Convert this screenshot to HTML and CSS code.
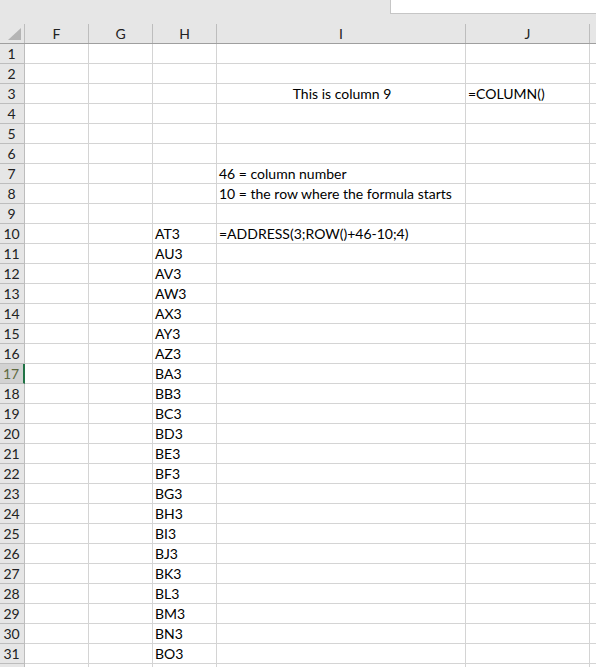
FILE: index.html
```html
<!DOCTYPE html>
<html lang="en">
<head>
    <meta charset="UTF-8">
    <title>Sheet1</title>
    <link rel="stylesheet" href="styles.css">
</head>
<body>
    <!-- ribbon strip with the name box edge -->
    <div class="topbar">
        <div class="namebox"></div>
    </div>

    <div class="sheet">
        <div class="row head">
            <div class="corner"><span class="tri"></span></div>
            <div class="col">F</div>
            <div class="col">G</div>
            <div class="col">H</div>
            <div class="col">I</div>
            <div class="col">J</div>
            <div class="col"></div>
        </div>
        <div class="row"><div class="rh">1</div><div class="c"></div><div class="c"></div><div class="c"></div><div class="c"></div><div class="c"></div><div class="c"></div></div>
        <div class="row"><div class="rh">2</div><div class="c"></div><div class="c"></div><div class="c"></div><div class="c"></div><div class="c"></div><div class="c"></div></div>
        <div class="row"><div class="rh">3</div><div class="c"></div><div class="c"></div><div class="c"></div><div class="c center">This is column 9</div><div class="c">=COLUMN()</div><div class="c"></div></div>
        <div class="row"><div class="rh">4</div><div class="c"></div><div class="c"></div><div class="c"></div><div class="c"></div><div class="c"></div><div class="c"></div></div>
        <div class="row"><div class="rh">5</div><div class="c"></div><div class="c"></div><div class="c"></div><div class="c"></div><div class="c"></div><div class="c"></div></div>
        <div class="row"><div class="rh">6</div><div class="c"></div><div class="c"></div><div class="c"></div><div class="c"></div><div class="c"></div><div class="c"></div></div>
        <div class="row"><div class="rh">7</div><div class="c"></div><div class="c"></div><div class="c"></div><div class="c">46 = column number</div><div class="c"></div><div class="c"></div></div>
        <div class="row"><div class="rh">8</div><div class="c"></div><div class="c"></div><div class="c"></div><div class="c">10 = the row where the formula starts</div><div class="c"></div><div class="c"></div></div>
        <div class="row"><div class="rh">9</div><div class="c"></div><div class="c"></div><div class="c"></div><div class="c"></div><div class="c"></div><div class="c"></div></div>
        <div class="row"><div class="rh">10</div><div class="c"></div><div class="c"></div><div class="c">AT3</div><div class="c overflow">=ADDRESS(3;ROW()+46-10;4)</div><div class="c"></div><div class="c"></div></div>
        <div class="row"><div class="rh">11</div><div class="c"></div><div class="c"></div><div class="c">AU3</div><div class="c"></div><div class="c"></div><div class="c"></div></div>
        <div class="row"><div class="rh">12</div><div class="c"></div><div class="c"></div><div class="c">AV3</div><div class="c"></div><div class="c"></div><div class="c"></div></div>
        <div class="row"><div class="rh">13</div><div class="c"></div><div class="c"></div><div class="c">AW3</div><div class="c"></div><div class="c"></div><div class="c"></div></div>
        <div class="row"><div class="rh">14</div><div class="c"></div><div class="c"></div><div class="c">AX3</div><div class="c"></div><div class="c"></div><div class="c"></div></div>
        <div class="row"><div class="rh">15</div><div class="c"></div><div class="c"></div><div class="c">AY3</div><div class="c"></div><div class="c"></div><div class="c"></div></div>
        <div class="row"><div class="rh">16</div><div class="c"></div><div class="c"></div><div class="c">AZ3</div><div class="c"></div><div class="c"></div><div class="c"></div></div>
        <div class="row"><div class="rh active">17</div><div class="c"></div><div class="c"></div><div class="c">BA3</div><div class="c"></div><div class="c"></div><div class="c"></div></div>
        <div class="row"><div class="rh">18</div><div class="c"></div><div class="c"></div><div class="c">BB3</div><div class="c"></div><div class="c"></div><div class="c"></div></div>
        <div class="row"><div class="rh">19</div><div class="c"></div><div class="c"></div><div class="c">BC3</div><div class="c"></div><div class="c"></div><div class="c"></div></div>
        <div class="row"><div class="rh">20</div><div class="c"></div><div class="c"></div><div class="c">BD3</div><div class="c"></div><div class="c"></div><div class="c"></div></div>
        <div class="row"><div class="rh">21</div><div class="c"></div><div class="c"></div><div class="c">BE3</div><div class="c"></div><div class="c"></div><div class="c"></div></div>
        <div class="row"><div class="rh">22</div><div class="c"></div><div class="c"></div><div class="c">BF3</div><div class="c"></div><div class="c"></div><div class="c"></div></div>
        <div class="row"><div class="rh">23</div><div class="c"></div><div class="c"></div><div class="c">BG3</div><div class="c"></div><div class="c"></div><div class="c"></div></div>
        <div class="row"><div class="rh">24</div><div class="c"></div><div class="c"></div><div class="c">BH3</div><div class="c"></div><div class="c"></div><div class="c"></div></div>
        <div class="row"><div class="rh">25</div><div class="c"></div><div class="c"></div><div class="c">BI3</div><div class="c"></div><div class="c"></div><div class="c"></div></div>
        <div class="row"><div class="rh">26</div><div class="c"></div><div class="c"></div><div class="c">BJ3</div><div class="c"></div><div class="c"></div><div class="c"></div></div>
        <div class="row"><div class="rh">27</div><div class="c"></div><div class="c"></div><div class="c">BK3</div><div class="c"></div><div class="c"></div><div class="c"></div></div>
        <div class="row"><div class="rh">28</div><div class="c"></div><div class="c"></div><div class="c">BL3</div><div class="c"></div><div class="c"></div><div class="c"></div></div>
        <div class="row"><div class="rh">29</div><div class="c"></div><div class="c"></div><div class="c">BM3</div><div class="c"></div><div class="c"></div><div class="c"></div></div>
        <div class="row"><div class="rh">30</div><div class="c"></div><div class="c"></div><div class="c">BN3</div><div class="c"></div><div class="c"></div><div class="c"></div></div>
        <div class="row"><div class="rh">31</div><div class="c"></div><div class="c"></div><div class="c">BO3</div><div class="c"></div><div class="c"></div><div class="c"></div></div>
        <div class="row"><div class="rh"></div><div class="c"></div><div class="c"></div><div class="c"></div><div class="c"></div><div class="c"></div><div class="c"></div></div>
    </div>
</body>
</html>
```

FILE: styles.css
```css
* {
    box-sizing: border-box;
}

body {
    margin: 0;
    background-color: #ffffff;
    font-family: Lato, 'Open Sans', sans-serif;
    font-size: 14px;
    color: #000;
    overflow: hidden;
}

.topbar {
    height: 24px;
    background-color: #e6e6e6;
    display: flex;
    justify-content: flex-end;
}

.namebox {
    width: 206px;
    height: 14px;
    background-color: #ffffff;
    border-left: 1px solid #c6c6c6;
    border-bottom: 1px solid #c6c6c6;
}

.row {
    display: grid;
    grid-template-columns: 25px 64px 64px 64px 249px 124px 1fr;
    height: 20px;
}

.head {
    background-color: #e6e6e6;
    border-bottom: 1px solid #9f9f9f;
}

.corner {
    position: relative;
    border-right: 1px solid #bdbdbd;
}

.tri {
    position: absolute;
    right: 3px;
    bottom: 3px;
    width: 0;
    height: 0;
    border-left: 13px solid transparent;
    border-bottom: 12px solid #b4b4b4;
}

.col {
    border-right: 1px solid #bdbdbd;
    text-align: center;
    line-height: 19px;
    color: #222;
}

.col:last-child {
    border-right: none;
}

.rh {
    background-color: #e6e6e6;
    border-right: 1px solid #bdbdbd;
    border-bottom: 1px solid #bdbdbd;
    text-align: center;
    line-height: 19px;
    color: #222;
    padding-right: 1px;
}

.rh.active {
    background-color: #d2d2d2;
    border-right: 2px solid #217346;
    color: #5f6a3f;
}

.c {
    border-right: 1px solid #d4d4d4;
    border-bottom: 1px solid #d4d4d4;
    padding-left: 2px;
    line-height: 19px;
    white-space: nowrap;
    overflow: hidden;
}

.c:last-child {
    border-right: none;
}

.c.center {
    text-align: center;
}

.c.overflow {
    overflow: visible;
}
```
